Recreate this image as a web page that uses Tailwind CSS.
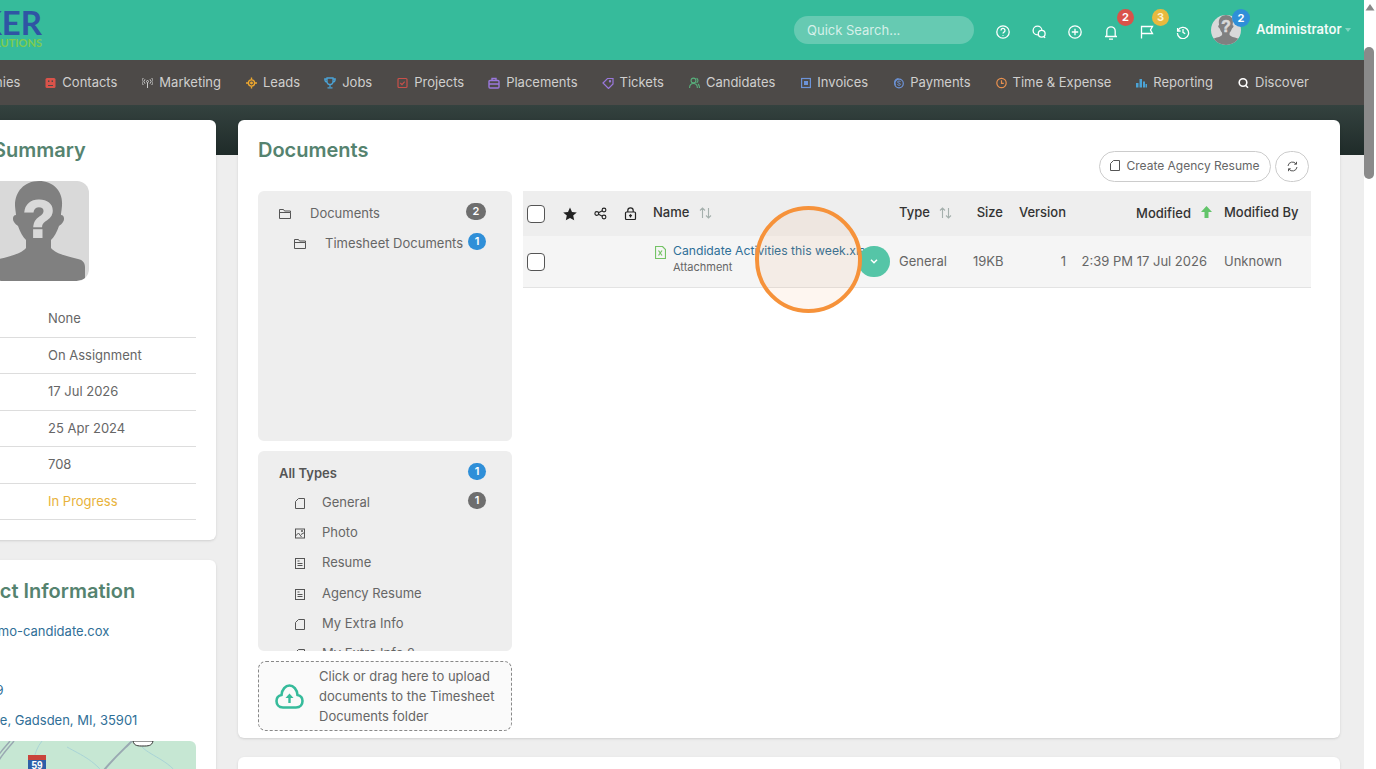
<!DOCTYPE html>
<html lang="en">
<head>
  <meta charset="UTF-8"/>
  <title>Candidate Documents</title>
  <script src="https://cdn.jsdelivr.net/npm/@tailwindcss/browser@4"></script>
</head>
<body class="font-['Inter',sans-serif] text-[13px] text-[#666]">
<div class="relative flex w-[1376px] h-[769px] overflow-hidden bg-[#eee]">
  <div class="w-[1364px] shrink-0 overflow-hidden">

    <!-- top bar -->
    <header class="flex items-center h-[60px] bg-[#36bb9b] text-white whitespace-nowrap">
      <div class="flex flex-col items-end w-[42px] -mt-[4px] font-['Lato',sans-serif] font-bold">
        <span class="text-[#2f55a4] text-[33px] leading-[29px]">KER</span>
        <span class="text-[#7ecb4f] text-[11px] leading-[11px]">SOLUTIONS</span>
      </div>
      <div class="ml-[752px] w-[180px] h-[28px] rounded-full bg-[#66cab2] text-[#d5f0e9] pl-[13px] leading-[28px] text-[13px]">Quick Search...</div>
      <div class="flex items-center ml-[22px] mt-[3px] gap-[22px]">
        <svg class="w-[14px] h-[14px]" viewBox="0 0 14 14" fill="none" stroke="#fff" stroke-width="1.3"><circle cx="7" cy="7" r="6.2"/><path d="M5 5.4a2 2 0 1 1 3 1.7c-.7.4-1 .8-1 1.5"/><path d="M7 10v.8"/></svg>
        <svg class="w-[14px] h-[14px]" viewBox="0 0 14 14" fill="none" stroke="#fff" stroke-width="1.3"><circle cx="5.5" cy="5.5" r="4.4"/><circle cx="9.7" cy="8.8" r="3.4" fill="#36bb9b"/><path d="M12 11.5l1 1.5"/></svg>
        <svg class="w-[14px] h-[14px]" viewBox="0 0 14 14" fill="none" stroke="#fff" stroke-width="1.3"><circle cx="7" cy="7" r="6.2"/><path d="M7 3.8v6.4M3.8 7h6.4"/></svg>
        <span class="relative w-[14px] h-[14px]">
          <svg class="w-[14px] h-[15px]" viewBox="0 0 14 15" fill="none" stroke="#fff" stroke-width="1.3"><path d="M1 11.5h12M2.8 11.5V6a4.2 4.2 0 0 1 8.400 0v5.500M5 14.200h4"/></svg>
          <span class="absolute left-[13px] -top-[16px] flex items-center justify-center w-[17px] h-[17px] rounded-full bg-[#d9534a] text-white text-[11px] font-bold">2</span>
        </span>
        <span class="relative w-[14px] h-[14px]">
          <svg class="w-[14px] h-[14px]" viewBox="0 0 14 14" fill="none" stroke="#fff" stroke-width="1.3"><path d="M1.500 13.500V1.500h11l-2 3.500 2 3.500h-11"/></svg>
          <span class="absolute left-[12px] -top-[16px] flex items-center justify-center w-[17px] h-[17px] rounded-full bg-[#e8b93e] text-[#fdf3d0] text-[11px] font-bold">3</span>
        </span>
        <svg class="w-[14px] h-[14px]" viewBox="0 0 14 14" fill="none" stroke="#fff" stroke-width="1.3"><path d="M1.600 3v3h3"/><path d="M2 5.500A5.600 5.600 0 1 1 1.400 8"/><path d="M7 4v3.300l2.200 1.400"/></svg>
      </div>
      <div class="relative w-[30px] h-[30px] ml-[21px]">
        <div class="w-[30px] h-[30px] rounded-full overflow-hidden bg-[#d9d9d9]">
          <svg class="w-[30px] h-[30px]" viewBox="0 0 100 100"><path fill="#808080" d="M50 0C35 0 26 11 26 24c0 3 1 8 1 10-3 0-4 4-2 7 1 2 3 3 4 4 2 6 5 11 8 14v8c-4 5-14 8-27 11-5 1-7 4-7 8v12c10 3 25 4 47 4s37-1 46-4V86c0-4-2-7-7-8-13-3-23-6-27-11v-8c3-3 6-8 8-14 1-1 3-2 4-4 2-3 1-7-2-7 0-2 1-7 1-10C74 11 65 0 50 0z"/><text x="50" y="56" text-anchor="middle" font-size="52" font-weight="700" fill="#d9d9d9" stroke="#d9d9d9" stroke-width="2" font-family="Liberation Sans">?</text></svg>
        </div>
        <span class="absolute left-[21px] -top-[6px] flex items-center justify-center w-[18px] h-[18px] rounded-full bg-[#2f8fd8] text-white text-[11px] font-bold">2</span>
      </div>
      <span class="ml-[15px] font-semibold text-[13px] text-[#f4fbf9]">Administrator</span>
      <svg class="w-[6px] h-[4px] ml-[3px]" viewBox="0 0 6 4"><path d="M0 0h6L3 4z" fill="#7fd6c1"/></svg>
    </header>

    <!-- main nav -->
    <nav class="flex items-center h-[45px] bg-[#4d4a48] text-[#d0cfce] text-[13px] whitespace-nowrap gap-[25px] -ml-[67px]">
      <span class="flex items-center gap-[6px]"><svg class="w-[12px] h-[12px]" viewBox="0 0 12 12"><rect x="1" y="1" width="10" height="10" rx="1.5" fill="#8f8"/></svg>Companies</span>
      <span class="flex items-center gap-[6px]"><svg class="w-[11px] h-[12px]" viewBox="0 0 11 12"><rect x=".5" y="1" width="10" height="10" rx="1.5" fill="#d9534a"/><rect x="3" y="3.4" width="1.4" height="1.6" fill="#4d4a48"/><rect x="6.6" y="3.4" width="1.4" height="1.6" fill="#4d4a48"/><path d="M3 8.5h5" stroke="#4d4a48"/></svg>Contacts</span>
      <span class="flex items-center gap-[6px]"><svg class="w-[11px] h-[12px]" viewBox="0 0 11 12" fill="none" stroke="#c9c9c9"><circle cx="5.5" cy="4.5" r="1"/><path d="M5.500 5.500V11M3 2.300a3 3 0 0 0 0 4.400M8 2.300a3 3 0 0 1 0 4.400M1.300 1a5 5 0 0 0 0 7M9.700 1a5 5 0 0 1 0 7"/></svg>Marketing</span>
      <span class="flex items-center gap-[6px]"><svg class="w-[11px] h-[12px]" viewBox="0 0 12 12" fill="none" stroke="#eda72f" stroke-width="1.5"><circle cx="6" cy="6" r="3.4"/><circle cx="6" cy="6" r=".8" fill="#eda72f"/><path d="M6 0v2.400M6 9.600V12M0 6h2.400M9.600 6H12"/></svg>Leads</span>
      <span class="flex items-center gap-[6px] -ml-[1px]"><svg class="w-[12px] h-[12px]" viewBox="0 0 12 12" fill="none" stroke="#4ba3d6" stroke-width="1.3"><path d="M3 1h6v3.500a3 3 0 0 1-6 0zM3 2H.8c0 2 .8 3 2.400 3.200M9 2h2.200c0 2-.8 3-2.400 3.200M6 7.500V10M3.500 10.800h5"/></svg>Jobs</span>
      <span class="flex items-center gap-[6px]"><svg class="w-[11px] h-[12px]" viewBox="0 0 11 12" fill="none" stroke="#c9504a" stroke-width="1.2"><rect x="1" y="1.500" width="9" height="9" rx="1"/><path d="M3.300 6l1.700 1.700 2.700-3"/></svg>Projects</span>
      <span class="flex items-center gap-[6px] -ml-[1px]"><svg class="w-[12px] h-[12px]" viewBox="0 0 12 12" fill="none" stroke="#9a78dc" stroke-width="1.4"><rect x="1" y="3.500" width="10" height="7.500" rx="1"/><path d="M4 3.500V1.500h4v2M1 7h10"/></svg>Placements</span>
      <span class="flex items-center gap-[6px] -ml-[1px]"><svg class="w-[12px] h-[12px]" viewBox="0 0 12 12" fill="none" stroke="#9a78dc" stroke-width="1.2"><path d="M1 6l4.500-4.500H11V7l-4.500 4.500z"/><circle cx="8" cy="4.200" r=".6"/></svg>Tickets</span>
      <span class="flex items-center gap-[6px]"><svg class="w-[11px] h-[12px]" viewBox="0 0 11 12" fill="none" stroke="#58b07c" stroke-width="1.1"><circle cx="4.500" cy="3.500" r="2.400"/><path d="M.6 11c0-3 1.700-4.500 3.900-4.500S8.400 8 8.400 11M7.500 1.300a2.400 2.400 0 0 1 0 4.400M9 7c1 .8 1.500 2 1.500 4"/></svg>Candidates</span>
      <span class="flex items-center gap-[6px] ml-[1px]"><svg class="w-[10px] h-[12px]" viewBox="0 0 10 12"><rect x=".6" y="1.500" width="8.800" height="9" fill="none" stroke="#6c93d8" stroke-width="1.2"/><rect x="3" y="4" width="4" height="4" fill="#6c93d8"/></svg>Invoices</span>
      <span class="flex items-center gap-[6px]"><svg class="w-[11px] h-[12px]" viewBox="0 0 11 12" fill="none" stroke="#6c93d8" stroke-width="1.2"><circle cx="6" cy="6.500" r="4.300"/><path d="M2.500 8A4 4 0 0 1 5.500 1.500"/><path d="M7.500 5a1.500 1 0 0 0-3 0c0 1.500 3 .8 3 2.300a1.500 1 0 0 1-3 0" stroke-width=".9"/></svg>Payments</span>
      <span class="flex items-center gap-[6px]"><svg class="w-[11px] h-[12px]" viewBox="0 0 11 12" fill="none" stroke="#e8904f" stroke-width="1.2"><circle cx="5.500" cy="6" r="4.700"/><path d="M5.500 3.200V6.300h2.300"/></svg>Time &amp; Expense</span>
      <span class="flex items-center gap-[6px]"><svg class="w-[11px] h-[12px]" viewBox="0 0 11 12" fill="#4ba3d6"><rect y="6" width="2.500" height="4.500"/><rect x="3.500" y="2" width="2.500" height="8.500"/><rect x="7" y="4.500" width="2" height="6"/><rect x="9.500" y="7" width="1.500" height="3.500"/></svg>Reporting</span>
      <span class="flex items-center gap-[6px]"><svg class="w-[11px] h-[12px]" viewBox="0 0 11 12" fill="none" stroke="#fff" stroke-width="1.6"><circle cx="5" cy="5.500" r="3.800"/><path d="M7.500 8.300l2.500 2.500"/></svg>Discover</span>
    </nav>

    <div class="flex gap-[22px] h-[664px] pt-[15px] -ml-[78px] bg-[linear-gradient(#34423f_0,#1f2b29_50px,#eeeeee_50px)]">

      <!-- left column -->
      <div class="flex flex-col gap-[20px] w-[294px] shrink-0">
        <section class="h-[420px] shrink-0 bg-white rounded-md shadow-sm px-[20px]">
          <h2 class="h-[61px] pt-[19px] pl-[51px] text-[20px] leading-[22px] font-semibold text-[#55836f]">Summary</h2>
          <div class="ml-[47px] w-[100px] h-[100px] rounded-xl overflow-hidden bg-[#d9d9d9]">
            <svg class="w-[100px] h-[100px]" viewBox="0 0 100 100"><path fill="#808080" d="M50 0C35 0 26 11 26 24c0 3 1 8 1 10-3 0-4 4-2 7 1 2 3 3 4 4 2 6 5 11 8 14v8c-4 5-14 8-27 11-5 1-7 4-7 8v12c10 3 25 4 47 4s37-1 46-4V86c0-4-2-7-7-8-13-3-23-6-27-11v-8c3-3 6-8 8-14 1-1 3-2 4-4 2-3 1-7-2-7 0-2 1-7 1-10C74 11 65 0 50 0z"/><text x="50" y="56" text-anchor="middle" font-size="52" font-weight="700" fill="#d9d9d9" stroke="#d9d9d9" stroke-width="2" font-family="Liberation Sans">?</text></svg>
          </div>
          <div class="mt-[20px]">
            <div class="flex items-center h-[36.5px] pl-[106px] border-b border-[#ddd]">None</div>
            <div class="flex items-center h-[36.5px] pl-[106px] border-b border-[#ddd]">On Assignment</div>
            <div class="flex items-center h-[36.5px] pl-[106px] border-b border-[#ddd]">17 Jul 2026</div>
            <div class="flex items-center h-[36.5px] pl-[106px] border-b border-[#ddd]">25 Apr 2024</div>
            <div class="flex items-center h-[36.5px] pl-[106px] border-b border-[#ddd]">708</div>
            <div class="flex items-center h-[36.5px] pl-[106px] border-b border-[#ddd] text-[#e8b23a]">In Progress</div>
          </div>
        </section>

        <section class="flex-1 bg-white rounded-t-md shadow-sm px-[20px] pt-[20px] whitespace-nowrap text-[#2f6f97]">
          <h2 class="text-[20px] leading-[22px] font-semibold text-[#55836f]">Contact Information</h2>
          <div class="mt-[15px] -ml-[7px] h-[29px] leading-[29px]">demo@demo-candidate.cox</div>
          <div class="h-[29px]"></div>
          <div class="h-[30px] leading-[30px]">256-5559</div>
          <div class="h-[30px] leading-[30px] ml-[12px]">12 Grove, Gadsden, MI, 35901</div>
          <div class="mt-[6px] h-[40px] rounded-t-md overflow-hidden bg-[#c6e7d3]">
            <svg class="w-[254px] h-[40px]" viewBox="0 0 254 40" fill="none">
              <path d="M68 0C62 8 50 18 44 40M72 0C66 8 54 18 48 40" stroke="#9aa9b2" stroke-width="1.5"/>
              <path d="M190 0c-12 12-26 24-36 40" stroke="#9aa9b2" stroke-width="2"/>
              <path d="M100 0c-10 12-6 24-20 40M125 6c14 8 30 14 42 34M200 6c10 10 30 14 40 34M25 0c6 8-4 16 0 40" stroke="#a9d3d6"/>
              <path d="M191 0c1 5 5 5 10 5s9 0 10-5z" fill="#fff" stroke="#333"/>
              <path d="M86 14h18v14c0 6-4 9-9 11-5-2-9-5-9-11z" fill="#2d5fa8"/>
              <rect x="86" y="14" width="18" height="5" fill="#c9443c"/>
              <text x="95" y="28" text-anchor="middle" font-size="10" font-weight="700" fill="#fff" font-family="Liberation Sans">59</text>
            </svg>
          </div>
        </section>
      </div>

      <!-- documents -->
      <div class="flex flex-col gap-[19px] w-[1102px] shrink-0">
        <section class="h-[618px] shrink-0 bg-white rounded-md shadow-sm pl-[20px] pr-[29px]">
          <div class="flex justify-between h-[71px]">
            <h2 class="pt-[19px] text-[20px] leading-[22px] font-semibold text-[#55836f]">Documents</h2>
            <div class="flex gap-[4px] mt-[31px] mr-[2px]">
              <button class="flex items-center justify-center gap-[6px] w-[172px] h-[31px] pb-[2px] rounded-full border border-[#ccc] text-[12px] text-[#666]">
                <svg class="w-[10px] h-[11px]" viewBox="0 0 10 11" fill="none" stroke="#555"><path d="M3.500.5h6v10H.5V3.500z"/></svg>
                Create Agency Resume
              </button>
              <button class="flex items-center justify-center w-[34px] h-[31px] rounded-full border border-[#ccc]">
                <svg class="w-[11px] h-[11px]" viewBox="0 0 11 11" fill="none" stroke="#555"><path d="M1 5a4.500 4.500 0 0 1 8.200-2M10 6a4.500 4.500 0 0 1-8.200 2"/><path d="M9.500.8v2.400H7.200M1.500 10.200V7.800h2.300"/></svg>
              </button>
            </div>
          </div>

          <div class="flex gap-[11px]">
            <!-- folder and type lists -->
            <div class="flex flex-col gap-[10px] w-[254px] shrink-0">
              <div class="h-[250px] rounded-md bg-[#eee] pt-[8px]">
                <div class="relative flex items-center h-[30px] pl-[21px]">
                  <svg class="w-[12px] h-[10px]" viewBox="0 0 12 10" fill="none" stroke="#555"><path d="M.5 9.500V.5h4l1 1.500h6v1.500M.5 9.500h11v-6H.5"/></svg>
                  <span class="ml-[19px]">Documents</span>
                  <span class="absolute right-[26px] top-[4px] flex items-center justify-center w-[20px] h-[17px] rounded-full bg-[#6e6e6e] text-white text-[11px] font-semibold">2</span>
                </div>
                <div class="relative flex items-center h-[30px] pl-[36px]">
                  <svg class="w-[12px] h-[10px]" viewBox="0 0 12 10" fill="none" stroke="#555"><path d="M.5 9.500V.5h4l1 1.500h6v1.500M.5 9.500h11v-6H.5"/></svg>
                  <span class="ml-[19px]">Timesheet Documents</span>
                  <span class="absolute right-[26px] top-[4px] flex items-center justify-center w-[18px] h-[17px] rounded-full bg-[#2f8fd8] text-white text-[11px] font-semibold">1</span>
                </div>
              </div>

              <div class="h-[200px] overflow-hidden rounded-md bg-[#eee] pt-[7px]">
                <div class="relative flex items-center h-[30px] pt-[2px] pl-[21px] font-semibold text-[#555]">
                  All Types
                  <span class="absolute right-[26px] top-[5px] flex items-center justify-center w-[18px] h-[17px] rounded-full bg-[#2f8fd8] text-white text-[11px] font-semibold">1</span>
                </div>
                <div class="relative flex items-center h-[30px] pl-[37px]">
                  <svg class="w-[10px] h-[11px]" viewBox="0 0 10 11" fill="none" stroke="#555"><path d="M3.500.5h6v10H.5V3.500z"/></svg>
                  <span class="ml-[17px]">General</span>
                  <span class="absolute right-[26px] top-[4px] flex items-center justify-center w-[18px] h-[17px] rounded-full bg-[#6e6e6e] text-white text-[11px] font-semibold">1</span>
                </div>
                <div class="flex items-center h-[30px] pl-[37px]">
                  <svg class="w-[10px] h-[11px]" viewBox="0 0 10 11" fill="none" stroke="#555"><rect x=".5" y="1" width="9" height="9"/><path d="M.5 8l3-3 3 4M6 6.500l3.500-2"/><circle cx="7" cy="3" r=".7"/></svg>
                  <span class="ml-[17px]">Photo</span>
                </div>
                <div class="flex items-center h-[30px] pl-[37px]">
                  <svg class="w-[10px] h-[11px]" viewBox="0 0 10 11" fill="none" stroke="#555"><rect x=".5" y=".5" width="9" height="10"/><path d="M2.500 3h2M2.500 5.500h5M2.500 7.500h5"/></svg>
                  <span class="ml-[17px]">Resume</span>
                </div>
                <div class="flex items-center h-[30px] pt-[2px] pl-[37px]">
                  <svg class="w-[10px] h-[11px]" viewBox="0 0 10 11" fill="none" stroke="#555"><rect x=".5" y=".5" width="9" height="10"/><path d="M2.500 3h2M2.500 5.500h5M2.500 7.500h5"/></svg>
                  <span class="ml-[17px]">Agency Resume</span>
                </div>
                <div class="flex items-center h-[30px] pt-[2px] pl-[37px]">
                  <svg class="w-[10px] h-[11px]" viewBox="0 0 10 11" fill="none" stroke="#555"><path d="M3.500.5h6v10H.5V3.500z"/></svg>
                  <span class="ml-[17px]">My Extra Info</span>
                </div>
                <div class="flex items-center h-[30px] pt-[2px] pl-[37px]">
                  <svg class="w-[10px] h-[11px]" viewBox="0 0 10 11" fill="none" stroke="#555"><path d="M3.500.5h6v10H.5V3.500z"/></svg>
                  <span class="ml-[17px]">My Extra Info 2</span>
                </div>
              </div>

              <div class="flex items-center h-[70px] rounded-lg border border-dashed border-[#888] bg-[#fafafa] pl-[16px]">
                <svg class="w-[29px] h-[25px] shrink-0" viewBox="0 0 29 25" fill="none" stroke="#36bb9b" stroke-width="2.6"><path d="M8 23.500C3.500 23.500 1.500 20 1.500 17c0-3.500 2.500-5.500 5-6C7 5.500 10.500 1.500 14.500 1.500S22 5.500 22.500 11c2.500.5 5 2.500 5 6 0 3-2 6.500-6.500 6.500z"/><path d="M14.500 19v-6" stroke-width="2.4"/><path d="M10.500 14l4-4.500 4 4.500z" fill="#36bb9b" stroke="none"/></svg>
                <p class="ml-[15px] leading-[20px]">Click or drag here to upload<br/>documents to the Timesheet<br/>Documents folder</p>
              </div>
            </div>

            <!-- file table -->
            <div class="w-[788px] shrink-0">
              <div class="grid grid-cols-[40px_31px_30px_29px_246px_74px_30px_63px_146px_99px] items-center h-[45px] pb-[2px] bg-[#eee] text-[#333]">
                <input type="checkbox" class="appearance-none ml-[4px] mt-[2px] w-[18px] h-[18px] rounded-[4px] border border-[#555] bg-white"/>
                <svg class="w-[14px] h-[14px] mt-[2px]" viewBox="0 0 14 14"><path fill="#222" d="M7 .5l2 4.400 4.800.5-3.600 3.200 1 4.700L7 10.900l-4.200 2.400 1-4.700L.2 5.400 5 4.900z"/></svg>
                <svg class="w-[13px] h-[13px] mt-[2px]" viewBox="0 0 13 13" fill="none" stroke="#222" stroke-width="1.1"><circle cx="2.800" cy="6.500" r="1.900"/><circle cx="10" cy="3" r="1.900"/><circle cx="10" cy="10" r="1.900"/><path d="M4.500 5.700l3.800-1.900M4.500 7.300l3.800 1.900"/></svg>
                <svg class="w-[13px] h-[13px] mt-[2px]" viewBox="0 0 13 13" fill="none" stroke="#222" stroke-width="1.2"><rect x="1.500" y="5" width="10" height="7.500" rx="1"/><path d="M3.800 5V3.500a2.700 2.700 0 0 1 5.400 0V5M6.500 10.500V8M5.200 9l1.300-1.200L7.800 9"/></svg>
                <div class="flex items-center font-medium">Name
                  <svg class="w-[13px] h-[12px] ml-[10px]" viewBox="0 0 13 12" fill="none" stroke="#a5b0ad" stroke-width="1.1"><path d="M3.500 11V1M1 3.500L3.500 1 6 3.500M9.500 1v10M7 8.500L9.500 11 12 8.500"/></svg>
                </div>
                <div class="flex items-center font-medium">Type
                  <svg class="w-[13px] h-[12px] ml-[9px]" viewBox="0 0 13 12" fill="none" stroke="#a5b0ad" stroke-width="1.1"><path d="M3.500 11V1M1 3.500L3.500 1 6 3.500M9.500 1v10M7 8.500L9.500 11 12 8.500"/></svg>
                </div>
                <div class="text-right font-medium -ml-[10px]">Size</div>
                <div class="text-right font-medium">Version</div>
                <div class="flex items-center justify-end font-medium pt-[2px]">Modified
                  <svg class="w-[11px] h-[12px] ml-[10px] -mt-[3px]" viewBox="0 0 11 12"><path fill="#62c46a" d="M5.500 0L11 6H7.500v6h-4V6H0z"/></svg>
                </div>
                <div class="pl-[12px] font-medium whitespace-nowrap">Modified By</div>
              </div>
              <div class="grid grid-cols-[40px_31px_30px_29px_246px_74px_30px_63px_146px_99px] items-center h-[52px] bg-[#f5f5f5] border-b border-[#e3e3e3]">
                <input type="checkbox" class="appearance-none ml-[4px] w-[18px] h-[18px] rounded-[4px] border border-[#555] bg-white"/>
                <span></span><span></span><span></span>
                <div class="relative flex h-full items-center overflow-hidden">
                  <svg class="w-[11px] h-[13px] ml-[2px] -mt-[18px] shrink-0" viewBox="0 0 11 13" fill="none" stroke="#74c365" stroke-width="1.2"><path d="M.5.500h7l3 3v9H.5z"/><path d="M3.500 4.500l3.500 5M7 4.500l-3.500 5"/></svg>
                  <div class="ml-[7px] -mt-[6px] whitespace-nowrap">
                    <div class="text-[12.2px] leading-[16px] text-[#2f6f97]">Candidate Activities this week.xlsx</div>
                    <div class="text-[11px] leading-[16px]">Attachment</div>
                  </div>
                  <span class="absolute right-[9px] top-[10px] flex items-center justify-center w-[32px] h-[31px] rounded-full bg-[#55c5a7]">
                    <svg class="w-[8px] h-[5px]" viewBox="0 0 8 5" fill="none" stroke="#fff" stroke-width="1.5"><path d="M1 .8l3 3 3-3"/></svg>
                  </span>
                </div>
                <div>General</div>
                <div class="text-right">19KB</div>
                <div class="text-right">1</div>
                <div class="text-right pr-[5px] whitespace-nowrap">2:39 PM 17 Jul 2026</div>
                <div class="pl-[12px]">Unknown</div>
              </div>
            </div>
          </div>
        </section>
        <section class="flex-1 bg-white rounded-t-md shadow-sm"></section>
      </div>
    </div>
  </div>

  <!-- page scrollbar -->
  <div class="relative w-[12px] shrink-0 bg-white">
    <svg class="w-[10px] h-[7px] mt-[4px] ml-[1px]" viewBox="0 0 10 7"><path d="M5 0l4.500 6.500h-9z" fill="#888"/></svg>
    <div class="mt-[36px] w-[10px] h-[132px] rounded-full bg-[#8a8a8a]"></div>
  </div>

  <!-- click highlight over the file row -->
  <div class="absolute left-[755px] top-[206px] w-[107px] h-[107px] rounded-full border-[4px] border-[#f6923a] bg-[#f6923a14]"></div>
</div>
</body>
</html>
